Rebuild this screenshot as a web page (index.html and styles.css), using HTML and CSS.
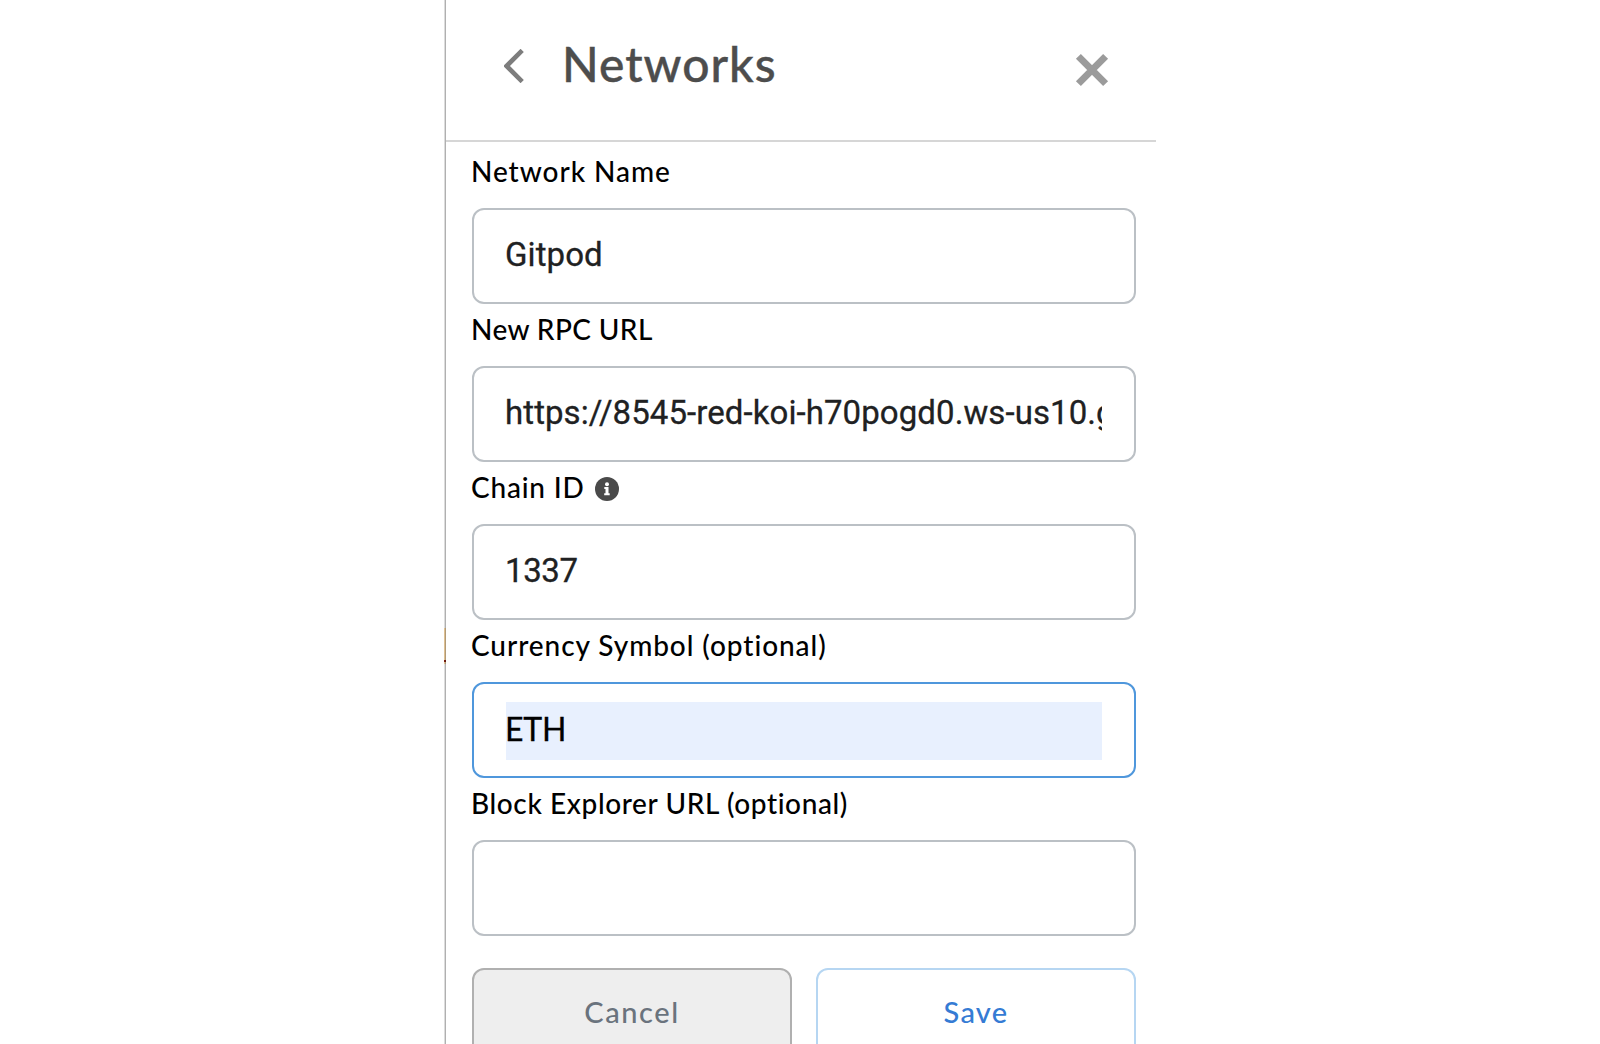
FILE: index.html
```html
<!DOCTYPE html>
<html lang="en">
<head>
<meta charset="utf-8">
<title>Networks</title>
<link rel="stylesheet" href="styles.css">
</head>
<body>
<div class="layout">
<div class="edge"></div>
<main class="panel">
  <header class="header">
    <svg class="back" viewBox="0 0 20 34"><path d="M18.2 1.4 2.6 17 18.2 32.6"/></svg>
    <h1 class="title">Networks</h1>
    <svg class="close" viewBox="0 0 34 34"><path d="M3.4 3.4 30.6 30.6M30.6 3.4 3.4 30.6"/></svg>
  </header>
  <form class="form">
    <div class="label name">Network Name</div>
    <div class="input"><span class="value">Gitpod</span></div>
    <div class="label rpc">New RPC URL</div>
    <div class="input"><span class="value">https://8545-red-koi-h70pogd0.ws-us10.g</span></div>
    <div class="label chain"><span>Chain ID</span>
      <svg class="info" viewBox="0 0 24 24"><circle cx="12" cy="12" r="12"/><path d="M9.3 10h4.2v6.2h1.2v2H9.2v-2h1.3v-4.2H9.3z"/><circle class="dot" cx="12" cy="7.2" r="2"/></svg>
    </div>
    <div class="input"><span class="value digits">1337</span></div>
    <div class="label currency">Currency Symbol (optional)</div>
    <div class="input focused"><span class="value autofill">ETH</span></div>
    <div class="label explorer">Block Explorer URL (optional)</div>
    <div class="input"></div>
    <div class="actions">
      <button type="button" class="button cancel">Cancel</button>
      <button type="button" class="button save">Save</button>
    </div>
  </form>
</main>
</div>
</body>
</html>
```
FILE: styles.css
```css
* { box-sizing: border-box; }
body { margin: 0; height: 1044px; overflow: hidden; background: #fff; color: #000; font-family: Lato, "Open Sans", sans-serif; }
.layout { display: flex; height: 1044px; padding-left: 444px; overflow: hidden; }
.edge {
  width: 2px;
  border-right: 1px solid rgba(0, 0, 0, .2);
  background: linear-gradient(#dcdcdc 628px, #dfc193 628px 660px, #7c1d10 660px 662px, #dfc193 662px 664px, #dcdcdc 664px);
}
.panel { width: 710px; height: 1044px; overflow: hidden; }
.header { display: flex; align-items: flex-start; height: 142px; padding: 0 47px 0 58px; border-bottom: 2px solid #d6d6d6; }
svg { display: block; fill: none; }
.back { width: 20px; height: 34px; margin-top: 49px; stroke: #7d7d7d; stroke-width: 4.6; }
.title { margin: 34px 0 0 38px; font-size: 48px; line-height: 60px; font-weight: 500; letter-spacing: 1px; color: #4d4d4d; -webkit-text-stroke: .4px; }
.close { width: 34px; height: 34px; margin: 53px 0 0 auto; stroke: #9b9b9b; stroke-width: 7; }
.form { padding: 4px 20px 0 26px; }
.label { display: flex; align-items: center; height: 62px; padding-bottom: 12px; font-size: 28px; line-height: 40px; font-weight: 500; white-space: nowrap; text-indent: -1px; }
.name { letter-spacing: .95px; }
.rpc { letter-spacing: .4px; }
.chain { letter-spacing: .8px; }
.currency { letter-spacing: .93px; }
.explorer { letter-spacing: .61px; }
.input { height: 96px; padding: 18px 32px; border: 2px solid #bbc0c5; border-radius: 12px; font: 33px/53px Roboto, sans-serif; color: #202122; }
.value { display: block; height: 58px; overflow: hidden; white-space: nowrap; letter-spacing: .08px; text-indent: -1px; -webkit-text-stroke: .3px; }
.digits { letter-spacing: -.4px; }
.info { width: 24px; height: 24px; margin: 3px 0 0 10px; fill: #4a4a4a; }
.info path, .info .dot { fill: #fff; }
.focused { border-color: #4f97dc; }
.autofill { background: #e8f0fe; color: #000; font-family: Lato, sans-serif; font-size: 32px; letter-spacing: -.2px; }
.actions { display: flex; gap: 24px; margin-top: 32px; }
.button { flex: 1; height: 88px; padding: 0; border: 2px solid #b0b0b0; border-radius: 12px; background: #eee; font: 500 29px/40px Lato, sans-serif; color: #6a737d; }
.cancel { letter-spacing: 1.6px; }
.save { border-color: #b6d6f2; background: #fff; color: #357bd4; letter-spacing: 1.3px; }
```
